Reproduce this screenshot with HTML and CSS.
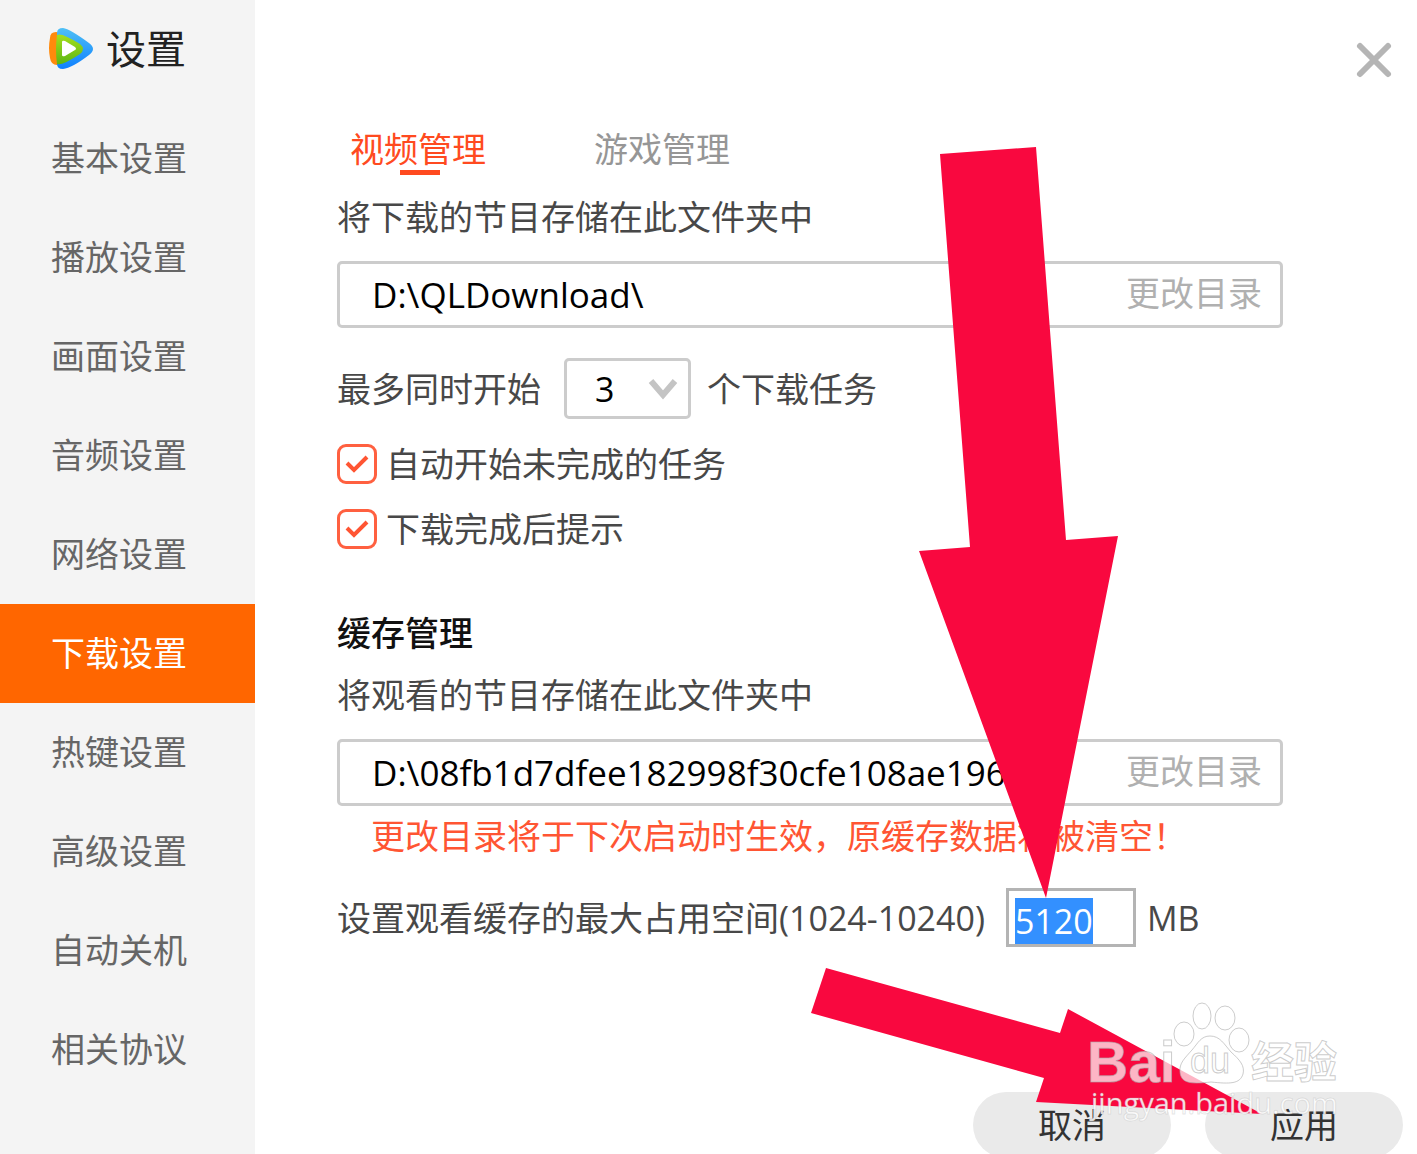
FILE: index.html
```html
<!DOCTYPE html>
<html lang="zh-CN">
<head>
    <meta charset="UTF-8">
    <title>设置</title>
    <link rel="stylesheet" href="styles.css">
</head>
<body>
<div class="window">
    <!-- 左侧导航 -->
    <aside class="sidebar">
        <h1 class="logo">
            <svg width="46" height="44" viewBox="0 0 46 44">
                <defs>
                    <linearGradient id="blau" x1="0" y1="0" x2="0" y2="1">
                        <stop offset="0" stop-color="#4fc0f5"/>
                        <stop offset="1" stop-color="#0f80ff"/>
                    </linearGradient>
                    <linearGradient id="gruen" x1="0" y1="0" x2="0" y2="1">
                        <stop offset="0" stop-color="#a6df1c"/>
                        <stop offset="1" stop-color="#5cb613"/>
                    </linearGradient>
                </defs>
                <path d="M2 11Q2 5 8 5L14 6V37L9 38Q3 38 2 31Q0 21 2 11Z" fill="#ff8a0c"/>
                <path d="M9 6Q9 1 15 1Q22 2 41 16Q49 22 41 28Q24 41 15 42Q9 42 9 37Z" fill="url(#blau)"/>
                <path d="M9 8Q13 5 32 17Q38 22 32 27Q14 39 9 37Q7 22 9 8Z" fill="url(#gruen)"/>
                <path d="M14 15Q14 13 17 14L27 20Q29 22 27 23L17 29Q14 30 14 28Z" fill="#fff"/>
            </svg>
            <span>设置</span>
        </h1>
        <nav class="menu">
            <a href="#">基本设置</a>
            <a href="#">播放设置</a>
            <a href="#">画面设置</a>
            <a href="#">音频设置</a>
            <a href="#">网络设置</a>
            <a href="#" class="active">下载设置</a>
            <a href="#">热键设置</a>
            <a href="#">高级设置</a>
            <a href="#">自动关机</a>
            <a href="#">相关协议</a>
        </nav>
    </aside>

    <!-- 下载设置 -->
    <main class="content">
        <header class="titlebar">
            <button class="close" type="button" aria-label="关闭">
                <svg width="38" height="38" viewBox="0 0 38 38">
                    <path d="M5 5L33 33M33 5L5 33" stroke="#b5b5b5" stroke-width="6" stroke-linecap="round"/>
                </svg>
            </button>
        </header>

        <div class="tabs">
            <button class="tab selected" type="button">视频管理</button>
            <button class="tab" type="button">游戏管理</button>
        </div>

        <label class="text" for="downloadDir">将下载的节目存储在此文件夹中</label>
        <div class="field">
            <input type="text" id="downloadDir" value="D:\QLDownload\">
            <button type="button">更改目录</button>
        </div>

        <div class="row tasks">
            <label for="maxTasks">最多同时开始</label>
            <div class="select">
                <select id="maxTasks">
                    <option>1</option>
                    <option>2</option>
                    <option selected>3</option>
                </select>
                <svg width="30" height="22" viewBox="0 0 30 22">
                    <path d="M3 3L15 17L27 3" fill="none" stroke="#c4c4c4" stroke-width="6"/>
                </svg>
            </div>
            <span>个下载任务</span>
        </div>

        <label class="check"><input type="checkbox" checked>自动开始未完成的任务</label>
        <label class="check"><input type="checkbox" checked>下载完成后提示</label>

        <h2 class="heading">缓存管理</h2>
        <label class="text" for="cacheDir">将观看的节目存储在此文件夹中</label>
        <div class="field">
            <input type="text" id="cacheDir" value="D:\08fb1d7dfee182998f30cfe108ae196">
            <button type="button">更改目录</button>
        </div>
        <p class="warning">更改目录将于下次启动时生效，原缓存数据将被清空！</p>

        <div class="row size">
            <label for="cacheSize">设置观看缓存的最大占用空间(1024-10240)</label>
            <input type="text" id="cacheSize" value="5120">
            <span>MB</span>
        </div>

        <footer class="buttons">
            <button type="button">取消</button>
            <button type="button">应用</button>
        </footer>
    </main>

    <!-- 箭头和水印 -->
    <svg class="overlay" width="1417" height="1154" viewBox="0 0 1417 1154">
        <g fill="#f9083f">
            <path d="M940 154L1036 147L1066 540L1118 536L1046 898L919 551L970 547Z"/>
            <path d="M826 968L1060 1033L1068 1009L1262 1114L1036 1102L1044 1078L811 1013Z"/>
        </g>
        <g class="watermark">
            <text class="brand" x="1087" y="1082">Bai</text>
            <ellipse cx="1184" cy="1034" rx="10" ry="12"/>
            <ellipse cx="1202" cy="1016" rx="9" ry="13"/>
            <ellipse cx="1225" cy="1018" rx="10" ry="12"/>
            <ellipse cx="1239" cy="1040" rx="10" ry="12"/>
            <path d="M1210 1036C1220 1036 1224 1044 1231 1052C1240 1060 1245 1066 1243 1074C1240 1084 1230 1084 1211 1082C1192 1084 1181 1084 1180 1072C1179 1063 1185 1058 1192 1050C1198 1043 1201 1036 1210 1036Z"/>
            <text class="du" x="1190" y="1073">du</text>
            <text class="jingyan" x="1251" y="1078">经验</text>
            <text class="url" x="1091" y="1114">jingyan.baidu.com</text>
        </g>
    </svg>
</div>

<script>
    // 打开窗口时选中缓存大小
    const cacheSize = document.getElementById('cacheSize');
    cacheSize.focus();
    cacheSize.select();
</script>
</body>
</html>
```
FILE: styles.css
```css
* {
    box-sizing: border-box;
}

body {
    margin: 0;
    background-color: #fff;
    color: #484848;
    font-family: "Open Sans", "Noto Sans CJK SC", sans-serif;
    font-size: 34px;
    line-height: 40px;
}

button, input, select {
    margin: 0;
    padding: 0;
    border: none;
    background: none;
    color: inherit;
    font: inherit;
}

button {
    cursor: pointer;
}

.window {
    position: relative;
    display: flex;
    height: 100vh;
    overflow: hidden;
}

/* 左侧导航 */
.sidebar {
    flex: none;
    width: 255px;
    background-color: #f4f4f4;
}

.logo {
    display: flex;
    align-items: center;
    gap: 12px;
    height: 109px;
    margin: 0;
    padding: 0 0 12px 48px;
    color: #222;
    font-size: 40px;
    font-weight: normal;
}

.menu a {
    display: flex;
    align-items: center;
    height: 99px;
    padding: 0 0 2px 51px;
    color: #666;
    text-decoration: none;
}

.menu .active {
    background-color: #ff6600;
    color: #fff;
}

/* 右侧内容 */
.content {
    flex: 1;
    min-width: 0;
    padding: 0 14px 0 82px;
}

.titlebar {
    display: flex;
    justify-content: flex-end;
    height: 129px;
    padding: 41px 10px 0 0;
}

.close {
    width: 38px;
    height: 38px;
}

.tabs {
    display: flex;
    gap: 108px;
    height: 46px;
    padding-left: 13px;
}

.tab {
    position: relative;
    height: 40px;
    color: #969696;
}

.tab.selected {
    color: #ff4a20;
}

/* 当前标签下的短线 */
.tab.selected::after {
    content: "";
    position: absolute;
    left: 50px;
    top: 41px;
    width: 40px;
    height: 5px;
    background-color: #ff4a20;
}

.text {
    display: block;
    margin-top: 22px;
}

.field {
    display: flex;
    align-items: center;
    height: 67px;
    margin: 24px 120px 0 0;
    padding: 0 18px 0 32px;
    border: 3px solid #ccc;
    border-radius: 5px;
}

.field input {
    flex: 1;
    min-width: 0;
    color: #000;
    font-size: 35px;
}

.field button {
    padding-bottom: 4px;
    color: #b0b0b0;
}

.row {
    display: flex;
    align-items: center;
}

.tasks {
    gap: 16px;
    height: 61px;
    margin-top: 30px;
}

.select {
    position: relative;
    width: 127px;
    height: 61px;
    margin-left: 7px;
    border: 3px solid #ccc;
    border-radius: 5px;
}

.select select {
    width: 100%;
    height: 100%;
    padding-left: 28px;
    appearance: none;
    color: #000;
}

.select svg {
    position: absolute;
    right: 10px;
    top: 17px;
    pointer-events: none;
}

.check {
    display: flex;
    align-items: center;
    gap: 9px;
    margin-top: 25px;
}

.check input {
    width: 40px;
    height: 40px;
    appearance: none;
    border: 3px solid #ff6040;
    border-radius: 9px;
    background: url("data:image/svg+xml,%3Csvg xmlns='http://www.w3.org/2000/svg' viewBox='0 0 34 34'%3E%3Cpath d='M7 16L14 23L27 10' fill='none' stroke='%23ff5533' stroke-width='4'/%3E%3C/svg%3E") center / 34px no-repeat;
}

.heading {
    margin: 64px 0 0;
    color: #111;
    font-size: 34px;
    font-weight: 500;
}

.warning {
    margin: 10px 0 0 34px;
    color: #ff5533;
}

.size {
    gap: 11px;
    height: 59px;
    margin-top: 32px;
}

.size label {
    padding-right: 10px;
}

.size input {
    width: 130px;
    height: 59px;
    padding: 6px 6px 0;
    border: 3px solid #b4b4b4;
    outline: none;
}

.size input::selection {
    background-color: #3390ff;
    color: #fff;
}

.buttons {
    display: flex;
    justify-content: flex-end;
    gap: 34px;
    margin-top: 145px;
}

.buttons button {
    width: 198px;
    height: 66px;
    border-radius: 33px;
    background-color: #eaeaea;
    color: #333;
}

/* 覆盖在窗口上的标注 */
.overlay {
    position: absolute;
    left: 0;
    top: 0;
    pointer-events: none;
}

.watermark {
    fill: #fff;
    fill-opacity: 0.7;
    stroke: #aaa;
    stroke-opacity: 0.6;
    stroke-width: 1;
}

.brand {
    font: bold 57px "Liberation Sans", sans-serif;
}

.du {
    font: 36px "Liberation Sans", sans-serif;
}

.jingyan {
    font: bold 43px "Noto Sans CJK SC", sans-serif;
}

.url {
    fill-opacity: 0.9;
    stroke-opacity: 0.3;
    font: 29px "Open Sans", sans-serif;
}
```
